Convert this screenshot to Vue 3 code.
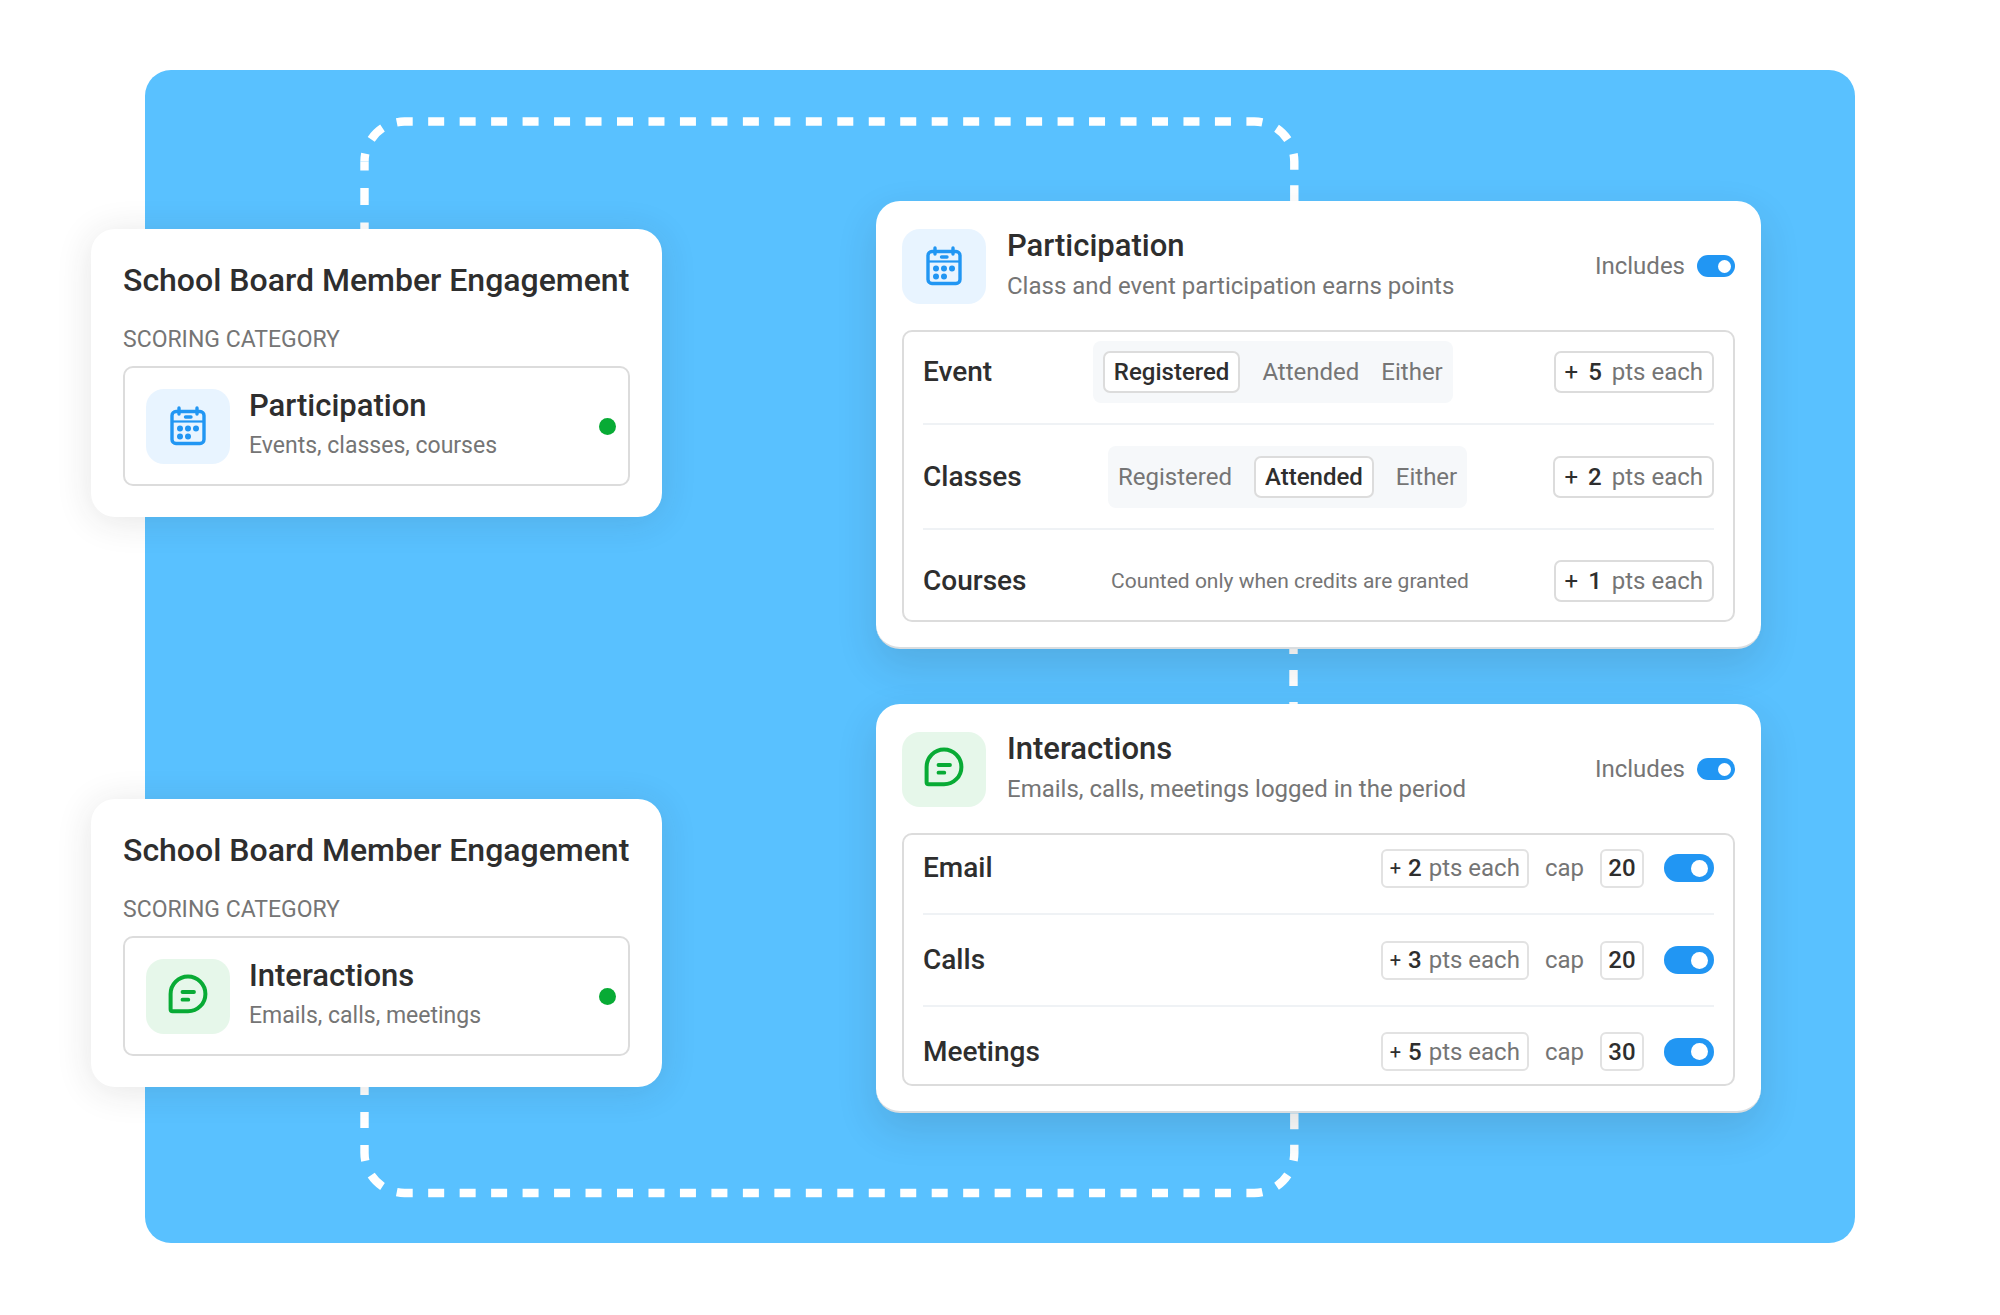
<template>
  <main class="page">
    <section class="board">
      <!-- Dashed connectors running behind the cards -->
      <svg class="connectors" width="1200" height="1173" viewBox="0 0 1200 1173" fill="none">
        <path class="link top" d="M219.5 91.500A40 40 0 0 1 259.500 51.500H1109.300A40 40 0 0 1 1149.300 91.500V140" />
        <path class="link top-left" d="M219.500 91.500V170" />
        <path class="link middle" d="M1148.500 568V640" />
        <path class="link top" d="M219.500 1083A40 40 0 0 0 259.500 1123H1109.300A40 40 0 0 0 1149.300 1083V1030" />
        <path class="link bottom-left" d="M219.500 1083V1010" />
      </svg>

      <div class="column column-left">
        <article v-for="card in summaries" :key="card.title" class="card summary">
          <h2 class="summary-title">School Board Member Engagement</h2>
          <p class="summary-label">SCORING CATEGORY</p>
          <div class="category">
            <span class="tile" :class="card.kind">
              <svg v-if="card.kind === 'calendar'" class="glyph" viewBox="0 0 40 40" fill="none">
                <rect x="4" y="5.500" width="32" height="32" rx="4" stroke-width="3.400" />
                <path d="M4 15.500H36" stroke-width="2.200" />
                <path d="M11 2v6M29 2v6M17.500 11h5.500" stroke-width="3.400" stroke-linecap="round" />
                <path d="M12 22.500h0M20 22.500h0M28 22.500h0M12 30.500h0M20 30.500h0" stroke-width="6" stroke-linecap="round" />
              </svg>
              <svg v-else class="glyph" viewBox="0 0 40 40" fill="none">
                <path d="M20 .5A17.400 17.400 0 0 1 20 35.300H4.600A2 2 0 0 1 2.600 33.300V17.900A17.400 17.400 0 0 1 20 .5Z" stroke-width="4" />
                <path d="M14.500 16H26M14.500 23.700H20.300" stroke-width="3.800" stroke-linecap="round" />
              </svg>
            </span>
            <div class="texts">
              <h3 class="heading">{{ card.title }}</h3>
              <p class="hint">{{ card.text }}</p>
            </div>
            <span class="dot"></span>
          </div>
        </article>
      </div>

      <div class="column column-right">
        <article v-for="card in details" :key="card.title" class="card detail">
          <header class="detail-head">
            <span class="tile" :class="card.kind">
              <svg v-if="card.kind === 'calendar'" class="glyph" viewBox="0 0 40 40" fill="none">
                <rect x="4" y="5.500" width="32" height="32" rx="4" stroke-width="3.400" />
                <path d="M4 15.500H36" stroke-width="2.200" />
                <path d="M11 2v6M29 2v6M17.500 11h5.500" stroke-width="3.400" stroke-linecap="round" />
                <path d="M12 22.500h0M20 22.500h0M28 22.500h0M12 30.500h0M20 30.500h0" stroke-width="6" stroke-linecap="round" />
              </svg>
              <svg v-else class="glyph" viewBox="0 0 40 40" fill="none">
                <path d="M20 .5A17.400 17.400 0 0 1 20 35.300H4.600A2 2 0 0 1 2.600 33.300V17.900A17.400 17.400 0 0 1 20 .5Z" stroke-width="4" />
                <path d="M14.500 16H26M14.500 23.700H20.300" stroke-width="3.800" stroke-linecap="round" />
              </svg>
            </span>
            <div class="texts">
              <h2 class="heading">{{ card.title }}</h2>
              <p class="hint">{{ card.text }}</p>
            </div>
            <label class="includes">
              Includes
              <input v-model="card.on" type="checkbox" class="toggle small" />
            </label>
          </header>

          <div v-if="card.kind === 'calendar'" class="rows">
            <div v-for="row in participation" :key="row.name" class="row">
              <h3 class="row-name">{{ row.name }}</h3>
              <div v-if="row.mode" class="segments">
                <button
                  v-for="mode in modes"
                  :key="mode"
                  type="button"
                  class="segment"
                  :class="{ active: row.mode === mode }"
                  @click="row.mode = mode"
                >{{ mode }}</button>
              </div>
              <p v-else class="note">Counted only when credits are granted</p>
              <div class="points">
                <span class="plus">+</span><b>{{ row.points }}</b><span>pts each</span>
              </div>
            </div>
          </div>

          <div v-else class="rows compact">
            <div v-for="row in interactions" :key="row.name" class="row">
              <h3 class="row-name">{{ row.name }}</h3>
              <div class="points">
                <span class="plus">+</span><b>{{ row.points }}</b><span>pts each</span>
              </div>
              <span class="cap">cap</span>
              <b class="limit">{{ row.cap }}</b>
              <input v-model="row.on" type="checkbox" class="toggle" :aria-label="row.name" />
            </div>
          </div>
        </article>
      </div>
    </section>
  </main>
</template>

<script setup>
import { reactive } from 'vue'

const modes = ['Registered', 'Attended', 'Either']

const summaries = [
  { kind: 'calendar', title: 'Participation', text: 'Events, classes, courses' },
  { kind: 'chat', title: 'Interactions', text: 'Emails, calls, meetings' }
]

const details = reactive([
  { kind: 'calendar', title: 'Participation', text: 'Class and event participation earns points', on: true },
  { kind: 'chat', title: 'Interactions', text: 'Emails, calls, meetings logged in the period', on: true }
])

const participation = reactive([
  { name: 'Event', mode: 'Registered', points: 5 },
  { name: 'Classes', mode: 'Attended', points: 2 },
  { name: 'Courses', mode: null, points: 1 }
])

const interactions = reactive([
  { name: 'Email', points: 2, cap: 20, on: true },
  { name: 'Calls', points: 3, cap: 20, on: true },
  { name: 'Meetings', points: 5, cap: 30, on: true }
])
</script>

<style>
body {
  margin: 0;
  background: #fff;
}
</style>

<style scoped>
* {
  box-sizing: border-box;
}

h2,
h3,
p {
  margin: 0;
  font-weight: 500;
}

b {
  font-weight: 500;
}

.page {
  padding: 70px 145px;
  font-family: Roboto, "Liberation Sans", sans-serif;
  font-size: 24px;
  line-height: 30px;
  color: #2e2e2e;
}

.board {
  position: relative;
  display: flex;
  gap: 214px;
  padding: 131px 94px 130px 0;
  border-radius: 26px;
  background: #59c1ff;
}

.connectors {
  position: absolute;
  top: 0;
  left: 0;
}

.link {
  stroke: #fff;
  stroke-width: 8.4;
}

.top {
  stroke-dasharray: 16 15.47;
  stroke-dashoffset: 8;
}

.top-left {
  stroke-dasharray: 17 17.5;
  stroke-dashoffset: 8;
}

.middle {
  stroke-dasharray: 16 16;
}

.bottom-left {
  stroke-dasharray: 16 17;
  stroke-dashoffset: 8;
}

.column {
  position: relative;
  display: flex;
  flex-direction: column;
}

.column-left {
  flex: none;
  justify-content: space-between;
  width: 571px;
  margin-left: -54px;
  padding: 28px 0 26px;
}

.column-right {
  flex: 1;
  gap: 55px;
}

.card {
  background: #fff;
  border-radius: 24px;
}

.summary {
  padding: 31px 32px;
  box-shadow: 0 4px 36px rgba(40, 40, 40, 0.12);
}

.summary-title {
  font-size: 32px;
  line-height: 40px;
  white-space: nowrap;
}

.summary-label {
  margin: 25px 0 11px;
  font-size: 23px;
  font-weight: 400;
  color: #757575;
}

.category {
  display: flex;
  align-items: center;
  gap: 19px;
  height: 120px;
  padding: 0 12px 0 21px;
  border: 2px solid #dcdcdc;
  border-radius: 10px;
}

.tile {
  display: flex;
  flex: none;
  align-items: center;
  justify-content: center;
  width: 84px;
  height: 75px;
  border-radius: 18px;
}

.calendar {
  background: #e8f4ff;
  color: #2196f3;
}

.chat {
  background: #e6f7ea;
  color: #08ab35;
}

.glyph {
  width: 40px;
  height: 40px;
  overflow: visible;
  stroke: currentColor;
}

.texts {
  flex: 1;
}

.heading {
  font-size: 31px;
  line-height: 40px;
}

.hint {
  font-weight: 400;
  line-height: 40px;
  color: #757575;
}

.category .hint {
  font-size: 23px;
}

.dot {
  width: 17px;
  height: 17px;
  border-radius: 50%;
  background: #08ab35;
}

.detail {
  padding: 25px 26px;
  border-bottom: 2px solid #d9dde0;
  box-shadow: 0 16px 40px rgba(40, 40, 40, 0.14);
}

.detail-head {
  display: flex;
  align-items: center;
  gap: 21px;
  margin-bottom: 24px;
}

.includes {
  display: flex;
  align-items: center;
  gap: 12px;
  color: #757575;
}

.toggle {
  appearance: none;
  display: flex;
  flex: none;
  align-items: center;
  width: 50px;
  height: 28px;
  margin: 0;
  padding: 0 6px;
  border-radius: 14px;
  background: #b5b5b5;
}

.toggle::before {
  content: "";
  width: 17px;
  height: 17px;
  border-radius: 50%;
  background: #fff;
}

.toggle:checked {
  justify-content: flex-end;
  background: #2196f3;
}

.toggle.small {
  width: 38px;
  height: 22px;
  padding: 0 4px;
}

.toggle.small::before {
  width: 13px;
  height: 13px;
}

.rows {
  padding: 0 19px;
  border: 2px solid #dcdcdc;
  border-radius: 10px;
}

.row {
  display: flex;
  align-items: center;
  justify-content: space-between;
  height: 105px;
}

.row + .row {
  border-top: 2px solid #eff2f5;
}

.row:first-child {
  height: 91px;
  padding-bottom: 12px;
}

.row:last-child {
  height: 92px;
  padding-top: 12px;
}

.row-name {
  font-size: 28px;
  line-height: 36px;
}

.segments {
  display: flex;
  gap: 22px;
  padding: 10px;
  border-radius: 8px;
  background: #f6f8fa;
}

.segment {
  height: 42px;
  padding: 0;
  border: 0;
  background: none;
  font: inherit;
  color: #757575;
}

.segment.active {
  padding: 0 9px;
  border: 2px solid #dcdcdc;
  border-radius: 7px;
  background: #fff;
  font-weight: 500;
  color: #2e2e2e;
}

.note {
  font-size: 21px;
  font-weight: 400;
  color: #757575;
}

.points {
  display: flex;
  align-items: center;
  gap: 10px;
  height: 42px;
  padding: 0 9px;
  border: 2px solid #dcdcdc;
  border-radius: 7px;
  color: #757575;
}

.points b,
.plus {
  color: #2e2e2e;
}

.compact .row {
  height: 92px;
}

.compact .row:first-child {
  height: 78px;
}

.compact .row:last-child {
  height: 79px;
}

.compact .row-name {
  flex: 1;
}

.compact .points,
.limit {
  height: 39px;
  border: 2px solid #e2e2e2;
  border-radius: 6px;
}

.compact .points {
  gap: 7px;
  padding: 0 7px;
}

.compact .plus {
  font-size: 20px;
}

.cap {
  margin: 0 16px;
  color: #757575;
}

.limit {
  display: flex;
  align-items: center;
  justify-content: center;
  min-width: 44px;
  margin-right: 20px;
}
</style>
